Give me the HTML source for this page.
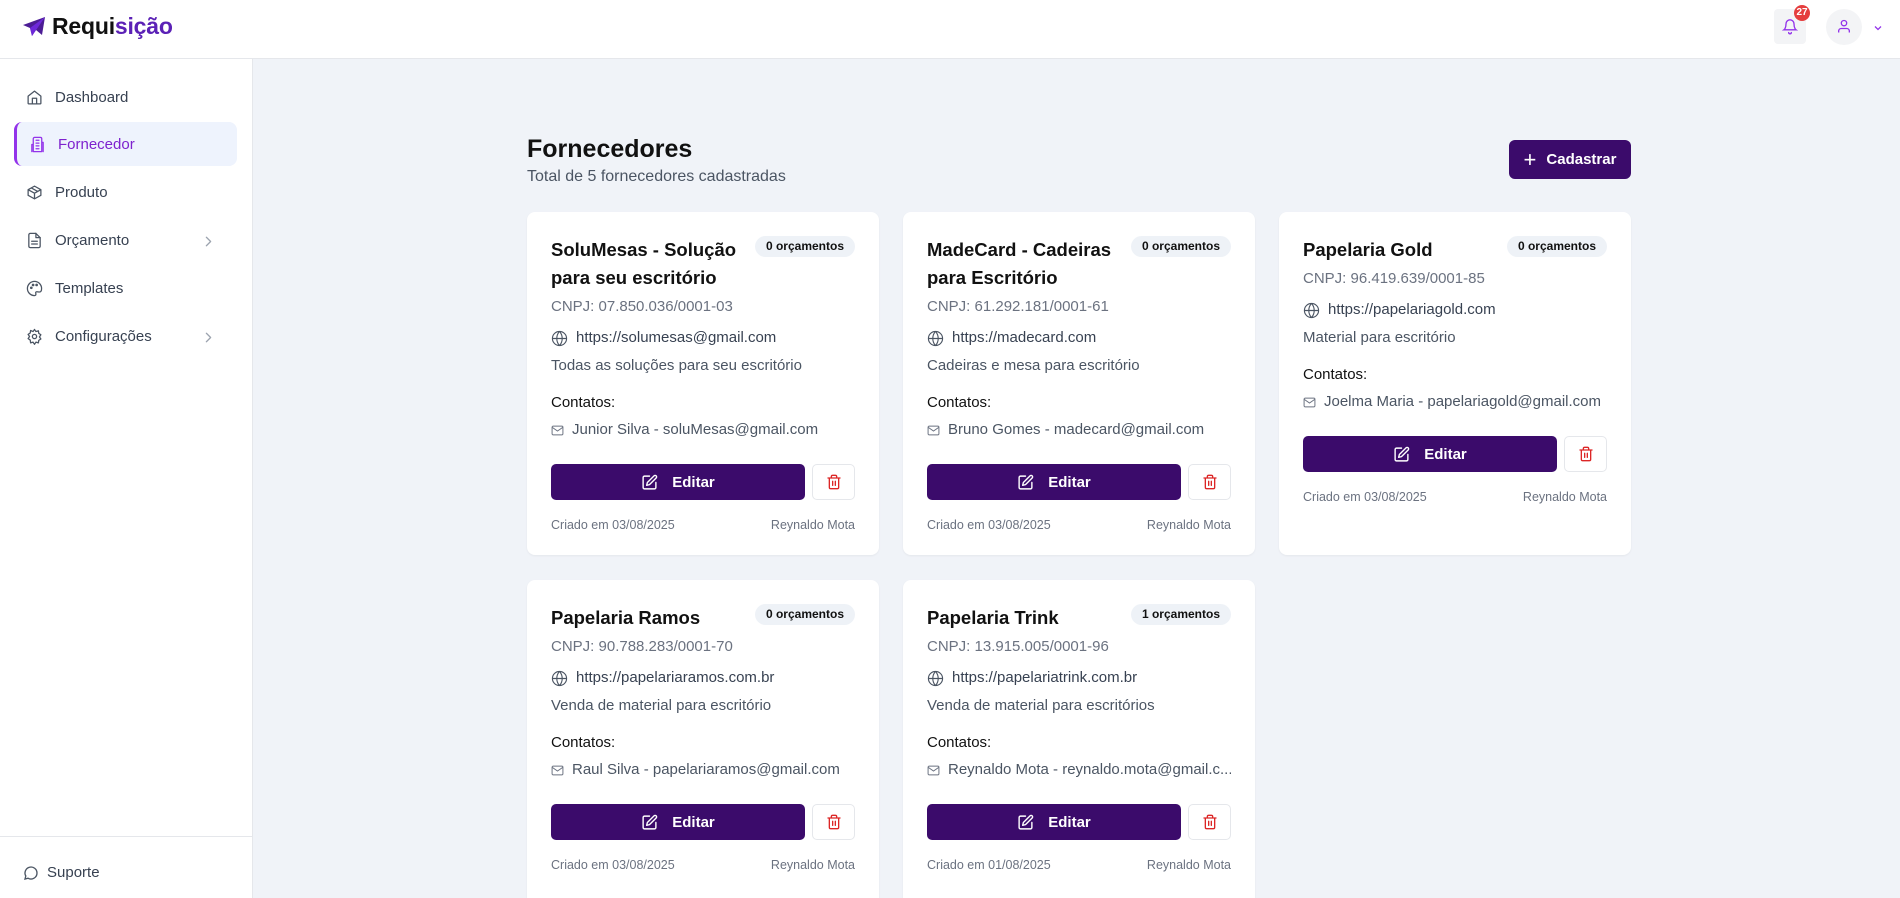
<!DOCTYPE html>
<html><head><meta charset="utf-8"><style>
*{box-sizing:border-box;margin:0;padding:0}
html{width:1900px;height:898px;overflow:hidden}
body{width:1900px;height:898px;overflow:hidden;font-family:"Liberation Sans",sans-serif;background:#f0f3f8;color:#111827;position:relative}
.hdr{position:absolute;left:0;top:0;width:1900px;height:59px;background:#fff;border-bottom:1px solid #e5e7eb}
.logo{position:absolute;left:22px;top:13px;display:flex;align-items:center;font-size:23px;font-weight:bold;color:#111;letter-spacing:-0.2px}
.logo span{color:#5b21b6}
.side{position:absolute;left:0;top:59px;width:253px;height:839px;background:#fff;border-right:1px solid #e5e7eb}
.nav{position:absolute;left:14px;width:223px;height:44px;display:flex;align-items:center;padding-left:12px;font-size:15px;color:#374151}
.nav svg{width:17px;height:17px;margin-right:12px;stroke:#4b5563;fill:none;stroke-width:1.8;stroke-linecap:round;stroke-linejoin:round}
.nav.act{background:#eef3fd;border-left:3px solid #9333ea;border-radius:8px;color:#7e22ce;padding-left:12px}
.nav.act svg{stroke:#9333ea}
.chev{position:absolute;right:20px;top:15px;width:14px;height:14px;stroke:#9ca3af!important;margin:0!important}
.sup{position:absolute;left:0;width:253px;border-top:1px solid #e5e7eb;height:62px;display:flex;align-items:center;padding-left:23px;padding-top:10px;font-size:15px;color:#374151}
h1{position:absolute;left:527px;top:135px;font-size:25px;font-weight:600;color:#111}
.sub{position:absolute;left:527px;top:168px;font-size:16px;color:#4b5563}
.cad{position:absolute;left:1509px;top:140px;width:122px;height:39px;background:#3b0b6b;border-radius:6px;color:#fff;font-size:15px;font-weight:bold;display:flex;align-items:center;justify-content:center;gap:10px}
.card{position:absolute;width:352px;background:#fff;border-radius:8px;padding:24px 24px 0;box-shadow:0 1px 2px rgba(0,0,0,.05);overflow:hidden}
.t{font-size:18.5px;font-weight:600;line-height:28px;width:210px;color:#111}
.badge{position:absolute;right:24px;top:24px;height:21px;padding:0 11px;background:#eef2f7;border-radius:11px;font-size:12px;font-weight:bold;line-height:21px;color:#111}
.cnpj{margin-top:4px;font-size:15px;color:#6b7280;line-height:22px}
.url{margin-top:8px;font-size:15px;color:#374151;line-height:24px;display:flex;align-items:center}
.url svg{width:17px;height:17px;margin-right:8px;stroke:#4b5563;fill:none;stroke-width:1.6}
.desc{margin-top:5px;font-size:15px;color:#4b5563;line-height:22px}
.ct{margin-top:15px;font-size:15px;color:#111;line-height:22px}
.cm{margin-top:5px;font-size:15px;color:#4b5563;line-height:22px;display:flex;align-items:center;white-space:nowrap;overflow:hidden}
.cm svg{width:13px;height:13px;margin-right:8px;stroke:#6b7280;fill:none;stroke-width:1.8;flex:none}
.btns{margin-top:23px;display:flex;gap:7px;height:36px}
.ed{width:254px;background:#3b0b6b;border-radius:5px;color:#fff;font-weight:bold;font-size:15px;display:flex;align-items:center;justify-content:center;gap:14px}
.ed svg{width:17px;height:17px;stroke:#fff;fill:none;stroke-width:2;stroke-linecap:round;stroke-linejoin:round}
.del{width:43px;border:1px solid #e5e7eb;border-radius:5px;display:flex;align-items:center;justify-content:center}
.del svg{width:16px;height:16px;stroke:#dc2626;fill:none;stroke-width:2;stroke-linecap:round}
.ft{margin-top:16px;display:flex;justify-content:space-between;font-size:12.5px;color:#6b7280;line-height:18px}
</style></head><body>
<div class="hdr">
<div class="logo"><svg width="24" height="22" viewBox="0 0 24 22"><path d="M23 1 L1 9 L8 12 L10 20 L14 14 L20 19 Z" fill="#4c1d95"/><path d="M8 12 L23 1 L10 20" fill="#6d28d9"/></svg><div style="margin-left:6px">Requi<span>sição</span></div></div>
<div style="position:absolute;left:1774px;top:9px;width:32px;height:35px;background:#f3f4f6;border-radius:4px"><svg style="position:absolute;left:8px;top:9px" width="16" height="17" viewBox="0 0 24 24" fill="none" stroke="#9333ea" stroke-width="2" stroke-linecap="round"><path d="M6 8a6 6 0 0112 0c0 7 3 9 3 9H3s3-2 3-9M10 21a2 2 0 004 0"/></svg></div>
<div style="position:absolute;left:1794px;top:5px;width:16px;height:16px;background:#e53e3e;border-radius:50%;color:#fff;font-size:10px;font-weight:bold;text-align:center;line-height:16px">27</div>
<div style="position:absolute;left:1826px;top:9px;width:36px;height:36px;background:#f3f4f6;border-radius:50%"><svg style="position:absolute;left:10px;top:9px" width="16" height="17" viewBox="0 0 24 24" fill="none" stroke="#9333ea" stroke-width="2"><circle cx="12" cy="7" r="4"/><path d="M4 21v-2a4 4 0 014-4h8a4 4 0 014 4v2"/></svg></div>
<svg style="position:absolute;left:1872px;top:22px" width="12" height="12" viewBox="0 0 24 24" fill="none" stroke="#9333ea" stroke-width="2.5"><path d="M6 9l6 6 6-6"/></svg>
</div>
<div class="side">
<div class="nav" style="top:16px"><svg viewBox="0 0 24 24"><path d="M3 10l9-7 9 7v10a1 1 0 01-1 1H4a1 1 0 01-1-1z"/><path d="M9 21v-8h6v8"/></svg>Dashboard</div>
<div class="nav act" style="top:63px"><svg viewBox="0 0 24 24"><path d="M6 22V4a2 2 0 012-2h8a2 2 0 012 2v18zM6 12H4v10M18 9h2v13M10 6h4M10 10h4M10 14h4M10 18h4"/></svg>Fornecedor</div>
<div class="nav" style="top:111px"><svg viewBox="0 0 24 24"><path d="M21 8l-9-5-9 5v8l9 5 9-5zM3 8l9 5 9-5M12 13v8M7.5 5.5l9 5"/></svg>Produto</div>
<div class="nav" style="top:159px"><svg viewBox="0 0 24 24"><path d="M14 2H6a2 2 0 00-2 2v16a2 2 0 002 2h12a2 2 0 002-2V8z"/><path d="M14 2v6h6M8 13h8M8 17h8"/></svg>Orçamento<svg class="chev" viewBox="0 0 24 24"><path d="M9 6l6 6-6 6"/></svg></div>
<div class="nav" style="top:207px"><svg viewBox="0 0 24 24"><path d="M12 2a10 10 0 000 20c1.5 0 2-1 2-2 0-1.5-1-2 0-3 1-1 3 0 5 0 2 0 3-2 3-5A10 10 0 0012 2z"/><circle cx="7.5" cy="11" r="1"/><circle cx="10" cy="7" r="1"/><circle cx="15" cy="7" r="1"/></svg>Templates</div>
<div class="nav" style="top:255px"><svg viewBox="0 0 24 24"><circle cx="12" cy="12" r="3"/><path d="M12 2l2 3 3.5-1 .5 3.5 3 2-2 3 2 3-3 2-.5 3.5-3.5-1-2 3-2-3-3.5 1L6 17l-3-2 2-3-2-3 3-2 .5-3.5L10 5z"/></svg>Configurações<svg class="chev" viewBox="0 0 24 24"><path d="M9 6l6 6-6 6"/></svg></div>
<div class="sup" style="top:777px"><svg width="16" height="16" viewBox="0 0 24 24" fill="none" stroke="#4b5563" stroke-width="2" style="margin-right:8px"><path d="M21 12a9 9 0 01-13.5 7.8L3 21l1.2-4.5A9 9 0 1121 12z"/></svg>Suporte</div>
</div>
<h1>Fornecedores</h1>
<div class="sub">Total de 5 fornecedores cadastradas</div>
<div class="cad"><span style="font-size:22px;font-weight:normal">+</span>Cadastrar</div>

<div class="card" style="left:527px;top:212px;height:343px"><div class="badge">0 orçamentos</div><div class="t">SoluMesas - Solução para seu escritório</div><div class="cnpj">CNPJ: 07.850.036/0001-03</div><div class="url"><svg viewBox="0 0 24 24"><circle cx="12" cy="12" r="10"/><path d="M2 12h20M12 2a15 15 0 010 20M12 2a15 15 0 000 20"/></svg>https://solumesas@gmail.com</div><div class="desc">Todas as soluções para seu escritório</div><div class="ct">Contatos:</div><div class="cm"><svg viewBox="0 0 24 24"><rect x="2" y="4" width="20" height="16" rx="2"/><path d="M2 6l10 7 10-7"/></svg>Junior Silva - soluMesas@gmail.com</div><div class="btns"><div class="ed"><svg viewBox="0 0 24 24"><path d="M12 3H5a2 2 0 00-2 2v14a2 2 0 002 2h14a2 2 0 002-2v-7"/><path d="M18.4 2.6a2 2 0 013 3L12 15l-4 1 1-4z"/></svg>Editar</div><div class="del"><svg viewBox="0 0 24 24"><path d="M3 6h18M19 6v14a2 2 0 01-2 2H7a2 2 0 01-2-2V6M8 6V4a2 2 0 012-2h4a2 2 0 012 2v2M10 11v6M14 11v6"/></svg></div></div><div class="ft"><span>Criado em 03/08/2025</span><span>Reynaldo Mota</span></div></div>

<div class="card" style="left:903px;top:212px;height:343px"><div class="badge">0 orçamentos</div><div class="t">MadeCard - Cadeiras para Escritório</div><div class="cnpj">CNPJ: 61.292.181/0001-61</div><div class="url"><svg viewBox="0 0 24 24"><circle cx="12" cy="12" r="10"/><path d="M2 12h20M12 2a15 15 0 010 20M12 2a15 15 0 000 20"/></svg>https://madecard.com</div><div class="desc">Cadeiras e mesa para escritório</div><div class="ct">Contatos:</div><div class="cm"><svg viewBox="0 0 24 24"><rect x="2" y="4" width="20" height="16" rx="2"/><path d="M2 6l10 7 10-7"/></svg>Bruno Gomes - madecard@gmail.com</div><div class="btns"><div class="ed"><svg viewBox="0 0 24 24"><path d="M12 3H5a2 2 0 00-2 2v14a2 2 0 002 2h14a2 2 0 002-2v-7"/><path d="M18.4 2.6a2 2 0 013 3L12 15l-4 1 1-4z"/></svg>Editar</div><div class="del"><svg viewBox="0 0 24 24"><path d="M3 6h18M19 6v14a2 2 0 01-2 2H7a2 2 0 01-2-2V6M8 6V4a2 2 0 012-2h4a2 2 0 012 2v2M10 11v6M14 11v6"/></svg></div></div><div class="ft"><span>Criado em 03/08/2025</span><span>Reynaldo Mota</span></div></div>

<div class="card" style="left:1279px;top:212px;height:343px"><div class="badge">0 orçamentos</div><div class="t">Papelaria Gold</div><div class="cnpj">CNPJ: 96.419.639/0001-85</div><div class="url"><svg viewBox="0 0 24 24"><circle cx="12" cy="12" r="10"/><path d="M2 12h20M12 2a15 15 0 010 20M12 2a15 15 0 000 20"/></svg>https://papelariagold.com</div><div class="desc">Material para escritório</div><div class="ct">Contatos:</div><div class="cm"><svg viewBox="0 0 24 24"><rect x="2" y="4" width="20" height="16" rx="2"/><path d="M2 6l10 7 10-7"/></svg>Joelma Maria - papelariagold@gmail.com</div><div class="btns"><div class="ed"><svg viewBox="0 0 24 24"><path d="M12 3H5a2 2 0 00-2 2v14a2 2 0 002 2h14a2 2 0 002-2v-7"/><path d="M18.4 2.6a2 2 0 013 3L12 15l-4 1 1-4z"/></svg>Editar</div><div class="del"><svg viewBox="0 0 24 24"><path d="M3 6h18M19 6v14a2 2 0 01-2 2H7a2 2 0 01-2-2V6M8 6V4a2 2 0 012-2h4a2 2 0 012 2v2M10 11v6M14 11v6"/></svg></div></div><div class="ft"><span>Criado em 03/08/2025</span><span>Reynaldo Mota</span></div></div>

<div class="card" style="left:527px;top:580px;height:318px;border-radius:8px 8px 0 0"><div class="badge">0 orçamentos</div><div class="t">Papelaria Ramos</div><div class="cnpj">CNPJ: 90.788.283/0001-70</div><div class="url"><svg viewBox="0 0 24 24"><circle cx="12" cy="12" r="10"/><path d="M2 12h20M12 2a15 15 0 010 20M12 2a15 15 0 000 20"/></svg>https://papelariaramos.com.br</div><div class="desc">Venda de material para escritório</div><div class="ct">Contatos:</div><div class="cm"><svg viewBox="0 0 24 24"><rect x="2" y="4" width="20" height="16" rx="2"/><path d="M2 6l10 7 10-7"/></svg>Raul Silva - papelariaramos@gmail.com</div><div class="btns"><div class="ed"><svg viewBox="0 0 24 24"><path d="M12 3H5a2 2 0 00-2 2v14a2 2 0 002 2h14a2 2 0 002-2v-7"/><path d="M18.4 2.6a2 2 0 013 3L12 15l-4 1 1-4z"/></svg>Editar</div><div class="del"><svg viewBox="0 0 24 24"><path d="M3 6h18M19 6v14a2 2 0 01-2 2H7a2 2 0 01-2-2V6M8 6V4a2 2 0 012-2h4a2 2 0 012 2v2M10 11v6M14 11v6"/></svg></div></div><div class="ft"><span>Criado em 03/08/2025</span><span>Reynaldo Mota</span></div></div>

<div class="card" style="left:903px;top:580px;height:318px;border-radius:8px 8px 0 0"><div class="badge">1 orçamentos</div><div class="t">Papelaria Trink</div><div class="cnpj">CNPJ: 13.915.005/0001-96</div><div class="url"><svg viewBox="0 0 24 24"><circle cx="12" cy="12" r="10"/><path d="M2 12h20M12 2a15 15 0 010 20M12 2a15 15 0 000 20"/></svg>https://papelariatrink.com.br</div><div class="desc">Venda de material para escritórios</div><div class="ct">Contatos:</div><div class="cm"><svg viewBox="0 0 24 24"><rect x="2" y="4" width="20" height="16" rx="2"/><path d="M2 6l10 7 10-7"/></svg>Reynaldo Mota - reynaldo.mota@gmail.c...</div><div class="btns"><div class="ed"><svg viewBox="0 0 24 24"><path d="M12 3H5a2 2 0 00-2 2v14a2 2 0 002 2h14a2 2 0 002-2v-7"/><path d="M18.4 2.6a2 2 0 013 3L12 15l-4 1 1-4z"/></svg>Editar</div><div class="del"><svg viewBox="0 0 24 24"><path d="M3 6h18M19 6v14a2 2 0 01-2 2H7a2 2 0 01-2-2V6M8 6V4a2 2 0 012-2h4a2 2 0 012 2v2M10 11v6M14 11v6"/></svg></div></div><div class="ft"><span>Criado em 01/08/2025</span><span>Reynaldo Mota</span></div></div>
</body></html>
